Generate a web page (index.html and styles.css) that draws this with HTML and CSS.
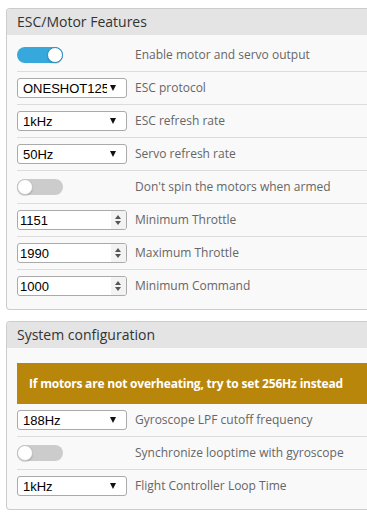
FILE: index.html
```html
<!DOCTYPE html>
<html lang="en">
<head>
  <meta charset="UTF-8">
  <meta name="viewport" content="width=device-width, initial-scale=1.0">
  <title>Configuration</title>
  <link rel="stylesheet" href="styles.css">
</head>
<body>
  <div class="panel">
    <div class="panel-head">ESC/Motor Features</div>
    <div class="panel-body">
      <div class="row">
        <span class="toggle on"><i></i></span>
        <span class="label">Enable motor and servo output</span>
      </div>
      <div class="row">
        <span class="select"><span class="val">ONESHOT125</span></span>
        <span class="label">ESC protocol</span>
      </div>
      <div class="row">
        <span class="select"><span class="val">1kHz</span></span>
        <span class="label">ESC refresh rate</span>
      </div>
      <div class="row">
        <span class="select"><span class="val">50Hz</span></span>
        <span class="label">Servo refresh rate</span>
      </div>
      <div class="row">
        <span class="toggle"><i></i></span>
        <span class="label">Don't spin the motors when armed</span>
      </div>
      <div class="row">
        <span class="number"><span class="val">1151</span><span class="spin"></span></span>
        <span class="label">Minimum Throttle</span>
      </div>
      <div class="row">
        <span class="number"><span class="val">1990</span><span class="spin"></span></span>
        <span class="label">Maximum Throttle</span>
      </div>
      <div class="row">
        <span class="number"><span class="val">1000</span><span class="spin"></span></span>
        <span class="label">Minimum Command</span>
      </div>
    </div>
  </div>

  <div class="panel">
    <div class="panel-head">System configuration</div>
    <div class="panel-body">
      <div class="note">If motors are not overheating, try to set 256Hz instead</div>
      <div class="row">
        <span class="select"><span class="val">188Hz</span></span>
        <span class="label">Gyroscope LPF cutoff frequency</span>
      </div>
      <div class="row">
        <span class="toggle"><i></i></span>
        <span class="label">Synchronize looptime with gyroscope</span>
      </div>
      <div class="row">
        <span class="select"><span class="val">1kHz</span></span>
        <span class="label">Flight Controller Loop Time</span>
      </div>
    </div>
  </div>
</body>
</html>
```
FILE: styles.css
```css
html,body{margin:0;padding:0;overflow:hidden}
body{
  background:#fff;
  padding:8px 0 0 6px;
  font:12px/1.5 "Open Sans", "Noto Sans", sans-serif;
  color:#666;
}
.panel {
  border:1px solid #ccc;
  border-right:0;
  border-radius:4px 0 0 4px;
  background:#f9f9f9;
  margin-bottom:11px;
  overflow:hidden;
}
.panel-head {
  height:26px;
  line-height:26px;
  padding-left:10px;
  background:#e4e4e4;
  font-size:14px;
  color:#333;
}
.panel-body {
  padding:4px 0 7px 10px;
}
.row {
  display:flex;
  align-items:center;
  gap:8px;
  height:32px;
  border-bottom:1px solid #dcdcdc;
}
.row:last-child {
  border-bottom:0;
}
.label {
  color:#666;
  white-space:nowrap;
}
/* toggles */
.toggle {
  box-sizing:border-box;
  width:46px;
  height:16px;
  border-radius:8px;
  background:#ccc;
  margin-right:64px;
  display:flex;
  align-items:center;
}
.toggle i {
  box-sizing:border-box;
  width:16px;
  height:16px;
  border-radius:50%;
  background:#fff;
  border:1px solid #c4c4c4;
  box-shadow:0 1px 1px rgba(0,0,0,0.15);
}
.toggle.on {
  background:#37a8db;
  justify-content:flex-end;
}
.toggle.on i {
  border-color:#2f8fbd;
}
/* selects and number boxes */
.select,
.number {
  box-sizing:border-box;
  flex:none;
  width:110px;
  height:20px;
  border:1px solid #aaa;
  border-radius:3px;
  background:#fff;
  display:flex;
  align-items:center;
  font:13px "Liberation Sans", Arial, sans-serif;
  color:#000;
}
.select .val {
  box-sizing:border-box;
  width:89px;
  overflow:hidden;
  white-space:nowrap;
  padding-left:5px;
}
.select::after {
  content:"";
  width:0;
  height:0;
  margin-left:auto;
  border-left:3px solid transparent;
  border-right:3px solid transparent;
  border-top:6px solid #111;
  margin-right:10px;
}
.number .val {
  flex:1;
  padding-left:2px;
}
.number .spin {
  position:relative;
  width:15px;
  height:18px;
  background:#f3f3f3;
  border-radius:0 2px 2px 0;
}
.number .spin::before,
.number .spin::after {
  content:"";
  position:absolute;
  left:4px;
  border-left:3.5px solid transparent;
  border-right:3.5px solid transparent;
}
.number .spin::before {
  top:4px;
  border-bottom:4px solid #555;
}
.number .spin::after {
  top:10px;
  border-top:4px solid #555;
}
.note {
  margin:11px 0 0;
  height:41px;
  line-height:41px;
  background:#b8860b;
  color:#fff;
  font-weight:bold;
  letter-spacing:-0.2px;
  padding-left:12px;
  white-space:nowrap;
  overflow:hidden;
}
```
